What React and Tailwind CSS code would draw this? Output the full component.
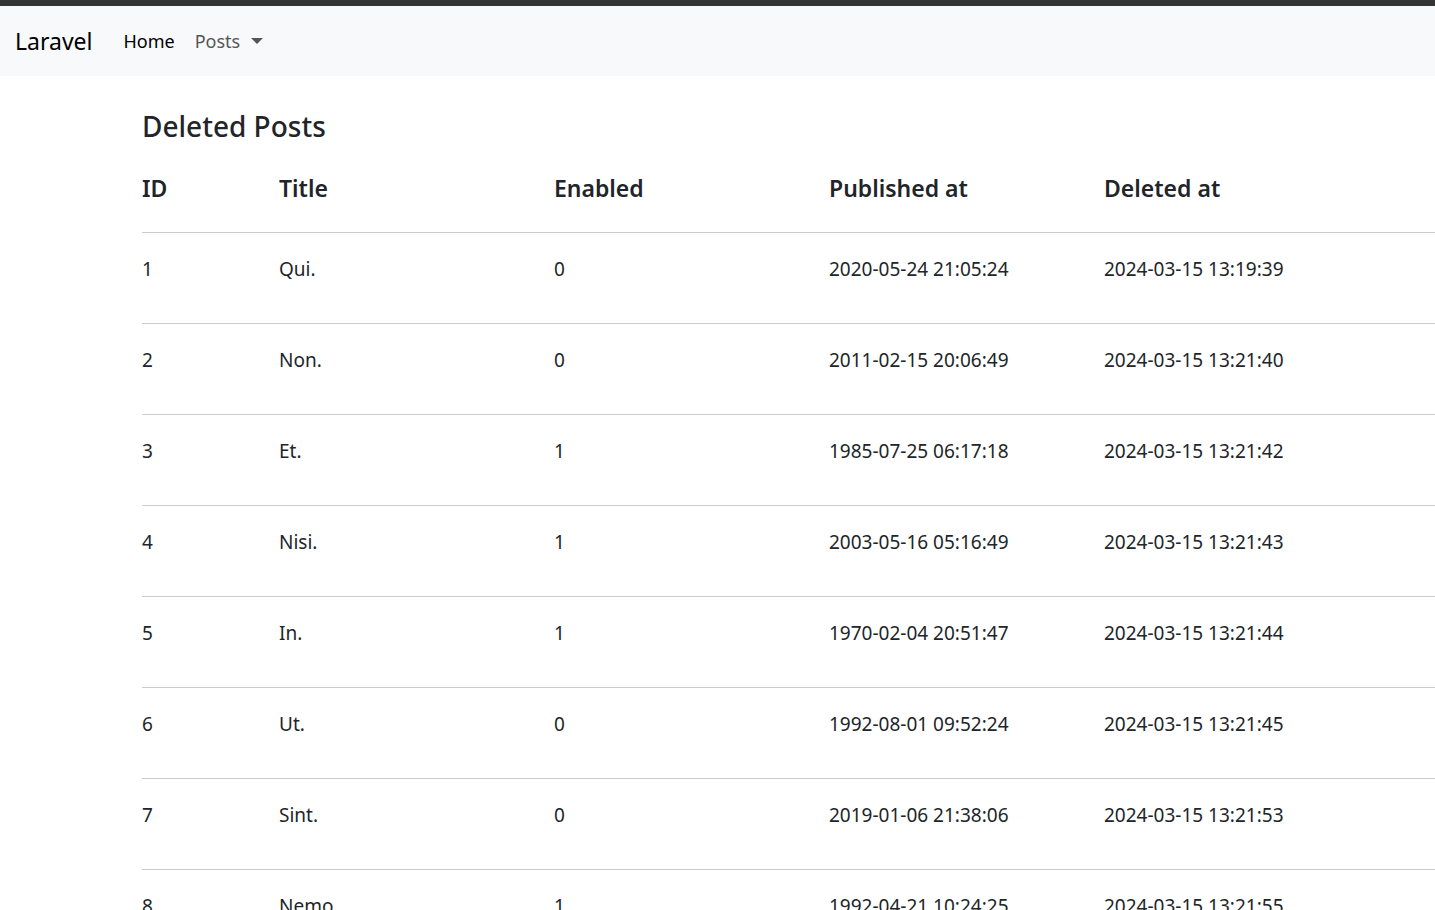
import React from "react";

const posts = [
  [1, "Qui.", 0, "2020-05-24 21:05:24", "2024-03-15 13:19:39"],
  [2, "Non.", 0, "2011-02-15 20:06:49", "2024-03-15 13:21:40"],
  [3, "Et.", 1, "1985-07-25 06:17:18", "2024-03-15 13:21:42"],
  [4, "Nisi.", 1, "2003-05-16 05:16:49", "2024-03-15 13:21:43"],
  [5, "In.", 1, "1970-02-04 20:51:47", "2024-03-15 13:21:44"],
  [6, "Ut.", 0, "1992-08-01 09:52:24", "2024-03-15 13:21:45"],
  [7, "Sint.", 0, "2019-01-06 21:38:06", "2024-03-15 13:21:53"],
  [8, "Nemo.", 1, "1992-04-21 10:24:25", "2024-03-15 13:21:55"],
];

export default function App() {
  return (
    <div className="h-[910px] overflow-hidden bg-white text-[#212529] font-['Noto_Sans',sans-serif]">
      <div className="h-[6px] bg-[#343434]" />
      <nav className="h-[70px] bg-[#f8f9fa] flex items-center pl-[15px]">
        <span className="text-[23px] text-black mr-[31px]">Laravel</span>
        <span className="text-[18px] text-black mr-[20px]">Home</span>
        <span className="text-[18px] text-[#555] flex items-center">
          Posts
          <span className="ml-[11px] w-0 h-0 border-l-[6px] border-r-[6px] border-t-[6px] border-l-transparent border-r-transparent border-t-[#555]" />
        </span>
      </nav>
      <div className="pl-[142px]">
        <h2 className="text-[28px] font-medium pt-[28px] leading-[44px]">Deleted Posts</h2>
        <table className="w-[1650px] mt-[22px] text-left border-collapse">
          <thead>
            <tr className="border-b border-[#cccccc] h-[62px] align-top">
              <th className="w-[137px] text-[23px] font-semibold leading-[36px]">ID</th>
              <th className="w-[275px] text-[23px] font-semibold leading-[36px]">Title</th>
              <th className="w-[275px] text-[23px] font-semibold leading-[36px]">Enabled</th>
              <th className="w-[275px] text-[23px] font-semibold leading-[36px]">Published at</th>
              <th className="w-[275px] text-[23px] font-semibold leading-[36px]">Deleted at</th>
              <th />
            </tr>
          </thead>
          <tbody>
            {posts.map((p) => (
              <tr key={p[0]} className="border-b border-[#cccccc] h-[91px] align-top text-[19px]">
                {p.map((v, i) => (
                  <td key={i} className="pt-[22px] leading-[28px]">{v}</td>
                ))}
                <td />
              </tr>
            ))}
          </tbody>
        </table>
      </div>
    </div>
  );
}
